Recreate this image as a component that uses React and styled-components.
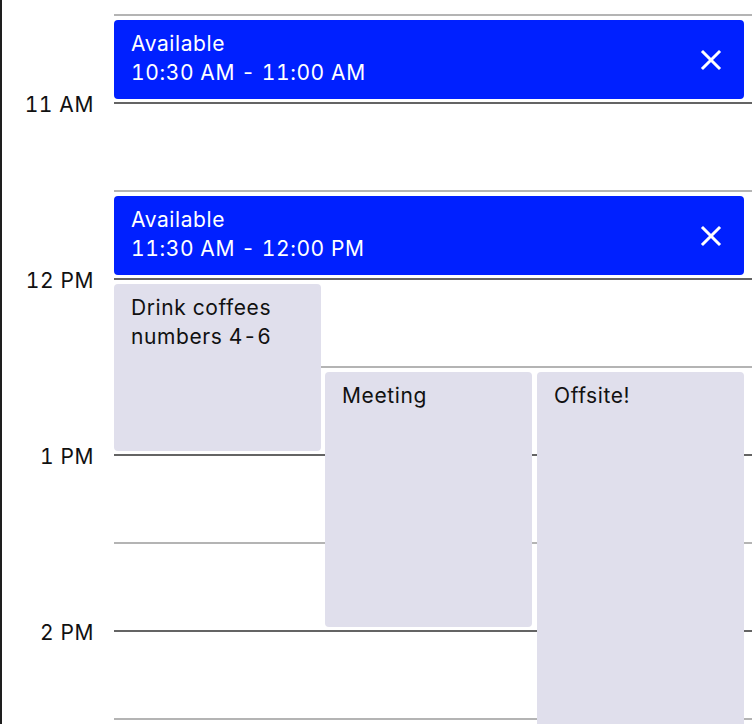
import React from 'react'
import styled, { createGlobalStyle } from 'styled-components'

const GlobalStyle = createGlobalStyle`
    html, body {
        margin: 0;
        padding: 0;
        background: #ffffff;
        overflow: hidden;
    }
    body {
        font-family: Inter, "Noto Sans", "Liberation Sans", sans-serif;
        font-feature-settings: "tnum";
        -webkit-font-smoothing: antialiased;
    }
`

const hours = [
    { row: 1, hour: false },
    { row: 2, hour: true, label: '11 AM' },
    { row: 3, hour: false },
    { row: 4, hour: true, label: '12 PM' },
    { row: 5, hour: false },
    { row: 6, hour: true, label: '1 PM' },
    { row: 7, hour: false },
    { row: 8, hour: true, label: '2 PM' },
    { row: 9, hour: false },
]

const events = [
    { id: 1, kind: 'available', row: 1, span: 1, col: '2 / 7', title: 'Available', time: '10:30 AM - 11:00 AM' },
    { id: 2, kind: 'available', row: 3, span: 1, col: '2 / 7', title: 'Available', time: '11:30 AM - 12:00 PM' },
    { id: 3, kind: 'busy', row: 4, span: 2, col: '2', title: 'Drink coffees numbers 4-6' },
    { id: 4, kind: 'busy', row: 5, span: 3, col: '4', title: 'Meeting' },
    { id: 5, kind: 'busy', row: 5, span: 5, col: '6', title: 'Offsite!' },
]

const CloseIcon = () => (
    <svg width="22" height="22" viewBox="0 0 22 22">
        <path d="M3 3 L19 19 M19 3 L3 19" stroke="#ffffff" strokeWidth="3" strokeLinecap="square" />
    </svg>
)

const App = () => {
    return (
        <Page>
            <GlobalStyle />
            <Timeline>
                {hours.map((h) => (
                    <GridLine key={'l' + h.row} $row={h.row} $hour={h.hour} />
                ))}
                {hours.filter((h) => h.label).map((h) => (
                    <HourLabel key={'t' + h.row} $row={h.row}>{h.label}</HourLabel>
                ))}
                {events.map((ev) => (
                    <Event key={ev.id} $row={ev.row} $span={ev.span} $col={ev.col} $kind={ev.kind}>
                        <EventText>
                            <div>{ev.title}</div>
                            {ev.time && <div>{ev.time}</div>}
                        </EventText>
                        {ev.kind === 'available' && (
                            <CloseButton>
                                <CloseIcon />
                            </CloseButton>
                        )}
                    </Event>
                ))}
            </Timeline>
        </Page>
    )
}

export default App

const Page = styled.div`
    height: 724px;
    border-left: 2px solid #1e1e1e;
    overflow: hidden;
    box-sizing: border-box;
`

const Timeline = styled.div`
    display: grid;
    grid-template-columns: 112px 207px 4px 207px 5px 207px 1fr;
    grid-auto-rows: 88px;
    padding-top: 14px;
`

const GridLine = styled.div`
    grid-column: 2 / -1;
    grid-row: ${(p) => p.$row};
    border-top: 2px solid ${(p) => (p.$hour ? '#646464' : '#b4b4b4')};
`

const HourLabel = styled.div`
    grid-column: 1;
    grid-row: ${(p) => p.$row};
    align-self: start;
    transform: translateY(-50%);
    margin-top: 3px;
    padding-right: 20px;
    text-align: right;
    font-size: 21px;
    line-height: 26px;
    letter-spacing: 0.6px;
    color: #111111;
`

const Event = styled.div`
    grid-column: ${(p) => p.$col};
    grid-row: ${(p) => p.$row} / span ${(p) => p.$span};
    margin: 6px 0 3px;
    border-radius: 4px;
    background: ${(p) => (p.$kind === 'available' ? '#0020ff' : '#e0dfec')};
    color: ${(p) => (p.$kind === 'available' ? '#ffffff' : '#111111')};
    display: flex;
    align-items: flex-start;
    justify-content: space-between;
    padding: 9px 17px;
    box-sizing: border-box;
`

const EventText = styled.div`
    font-size: 21px;
    line-height: 29px;
    letter-spacing: 0.6px;
`

const CloseButton = styled.div`
    align-self: center;
    display: flex;
    margin-right: 5px;
`
